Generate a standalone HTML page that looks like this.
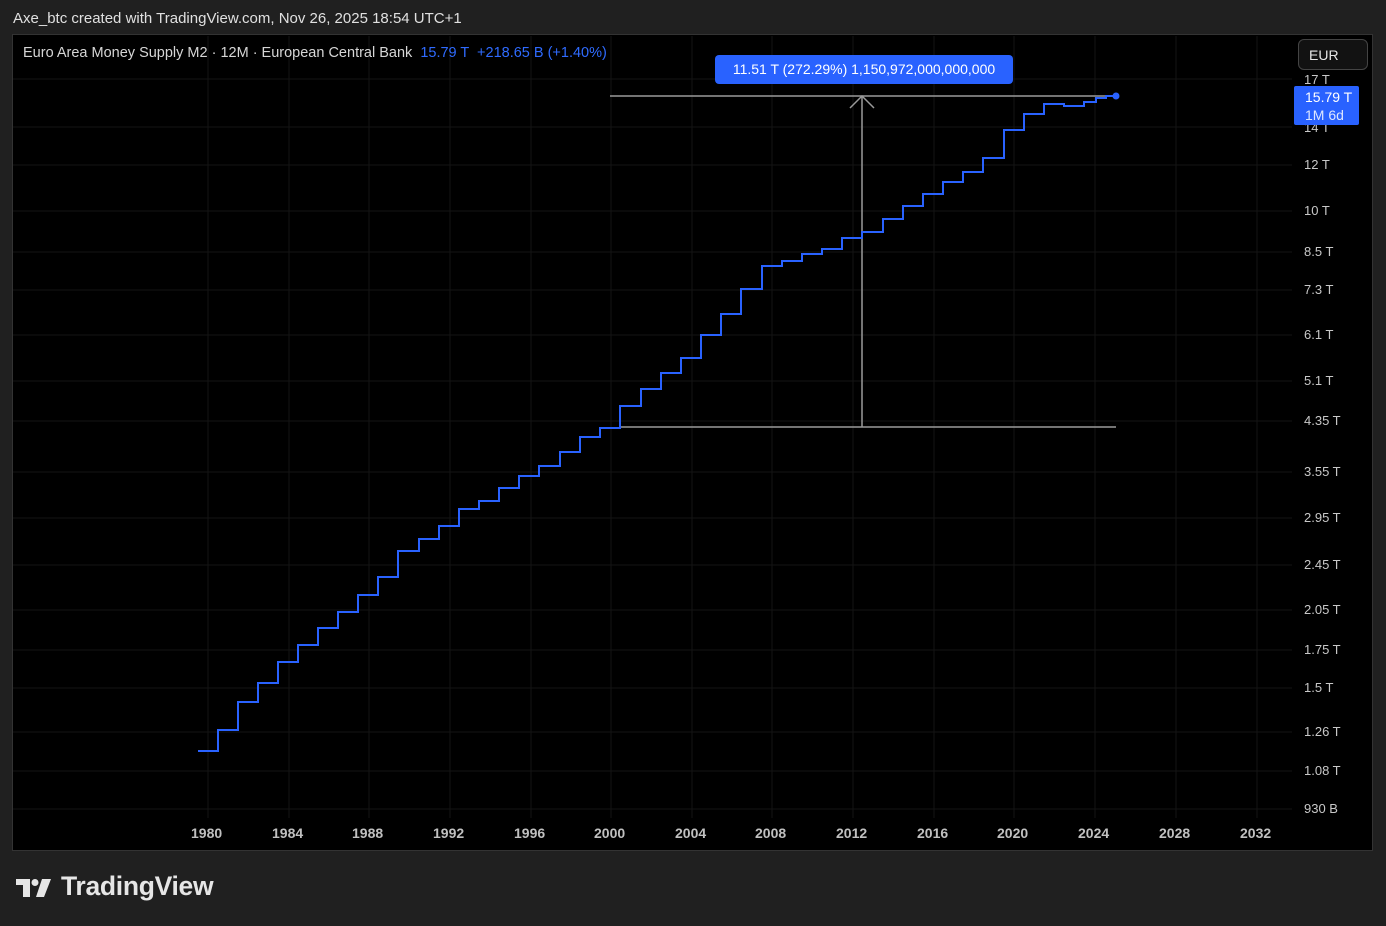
<!DOCTYPE html><html><head><style>
body{margin:0;width:1386px;height:926px;background:#202020;font-family:"Liberation Sans",sans-serif;overflow:hidden;position:relative}
.t{position:absolute;white-space:nowrap}
</style></head><body>
<div class="t" style="left:13px;top:10px;font-size:15px;color:#e0e0e0">Axe_btc created with TradingView.com, Nov 26, 2025 18:54 UTC+1</div>
<div style="position:absolute;left:12px;top:34px;width:1361px;height:817px;background:#000;border:1px solid #333;box-sizing:border-box"></div>
<svg style="position:absolute;left:0;top:0" width="1386" height="926">
<g stroke="#141414" stroke-width="1">
<line x1="208" y1="36" x2="208" y2="818"/><line x1="289" y1="36" x2="289" y2="818"/><line x1="369" y1="36" x2="369" y2="818"/><line x1="450" y1="36" x2="450" y2="818"/><line x1="531" y1="36" x2="531" y2="818"/><line x1="611" y1="36" x2="611" y2="818"/><line x1="692" y1="36" x2="692" y2="818"/><line x1="772" y1="36" x2="772" y2="818"/><line x1="853" y1="36" x2="853" y2="818"/><line x1="934" y1="36" x2="934" y2="818"/><line x1="1014" y1="36" x2="1014" y2="818"/><line x1="1095" y1="36" x2="1095" y2="818"/><line x1="1176" y1="36" x2="1176" y2="818"/><line x1="1257" y1="36" x2="1257" y2="818"/>
<line x1="13" y1="79" x2="1292" y2="79"/><line x1="13" y1="127" x2="1292" y2="127"/><line x1="13" y1="165" x2="1292" y2="165"/><line x1="13" y1="211" x2="1292" y2="211"/><line x1="13" y1="252" x2="1292" y2="252"/><line x1="13" y1="290" x2="1292" y2="290"/><line x1="13" y1="335" x2="1292" y2="335"/><line x1="13" y1="381" x2="1292" y2="381"/><line x1="13" y1="421" x2="1292" y2="421"/><line x1="13" y1="472" x2="1292" y2="472"/><line x1="13" y1="518" x2="1292" y2="518"/><line x1="13" y1="565" x2="1292" y2="565"/><line x1="13" y1="610" x2="1292" y2="610"/><line x1="13" y1="650" x2="1292" y2="650"/><line x1="13" y1="688" x2="1292" y2="688"/><line x1="13" y1="732" x2="1292" y2="732"/><line x1="13" y1="771" x2="1292" y2="771"/><line x1="13" y1="809" x2="1292" y2="809"/>
</g>
<g stroke="#9a9a9a" stroke-width="1.5" fill="none">
<line x1="610" y1="96" x2="1116" y2="96"/><line x1="620" y1="427" x2="1116" y2="427"/><line x1="862" y1="96" x2="862" y2="427"/>
<polyline points="850,108 862,96 874,108"/>
</g>
<polyline fill="none" stroke="#2962ff" stroke-width="2" points="198,751 218,751 218,730 238,730 238,702 258,702 258,683 278,683 278,662 298,662 298,645 318,645 318,628 338,628 338,612 358,612 358,595 378,595 378,577 398,577 398,551 419,551 419,539 439,539 439,526 459,526 459,509 479,509 479,501 499,501 499,488 519,488 519,476 539,476 539,466 560,466 560,452 580,452 580,437 600,437 600,428 620,428 620,406 641,406 641,389 661,389 661,373 681,373 681,358 701,358 701,335 721,335 721,314 741,314 741,289 762,289 762,266 782,266 782,261 802,261 802,254 822,254 822,249 842,249 842,238 862,238 862,232 883,232 883,219 903,219 903,206 923,206 923,194 943,194 943,182 963,182 963,172 983,172 983,158 1004,158 1004,130 1024,130 1024,114 1044,114 1044,104 1064,104 1064,106 1084,106 1084,102 1096,102 1096,98 1106,98 1106,96 1116,96"/>
<circle cx="1116" cy="96" r="3.5" fill="#2962ff"/>
<path d="M16 879h14v18h-7v-12h-7z" fill="#e6e6e6"/>
<circle cx="35" cy="882.5" r="3.5" fill="#e6e6e6"/>
<path d="M42 879h9l-7 18h-8z" fill="#e6e6e6"/>
</svg>
<div class="t" style="left:23px;top:45px;font-size:14.5px;color:#d6d6d6">Euro Area Money Supply M2 · 12M · European Central Bank <span style="color:#2f6bff">&nbsp;15.79 T &nbsp;+218.65 B (+1.40%)</span></div>
<div class="t" style="left:715px;top:55px;width:298px;height:29px;background:#2962ff;border-radius:4px;color:#fff;font-size:14px;line-height:29px;text-align:center">11.51 T (272.29%) 1,150,972,000,000,000</div>
<div class="t" style="left:1298px;top:39px;width:70px;height:31px;border:1px solid #444;border-radius:6px;background:#121212;color:#e6e6e6;font-size:14px;line-height:31px;box-sizing:border-box;padding-left:10px">EUR</div>
<div style="position:absolute;font-size:13px;color:#c8c8c8">
<div class="t" style="left:1304px;top:72px">17 T</div><div class="t" style="left:1304px;top:120px">14 T</div><div class="t" style="left:1304px;top:157px">12 T</div><div class="t" style="left:1304px;top:203px">10 T</div><div class="t" style="left:1304px;top:244px">8.5 T</div><div class="t" style="left:1304px;top:282px">7.3 T</div><div class="t" style="left:1304px;top:327px">6.1 T</div><div class="t" style="left:1304px;top:373px">5.1 T</div><div class="t" style="left:1304px;top:413px">4.35 T</div><div class="t" style="left:1304px;top:464px">3.55 T</div><div class="t" style="left:1304px;top:510px">2.95 T</div><div class="t" style="left:1304px;top:557px">2.45 T</div><div class="t" style="left:1304px;top:602px">2.05 T</div><div class="t" style="left:1304px;top:642px">1.75 T</div><div class="t" style="left:1304px;top:680px">1.5 T</div><div class="t" style="left:1304px;top:724px">1.26 T</div><div class="t" style="left:1304px;top:763px">1.08 T</div><div class="t" style="left:1304px;top:801px">930 B</div>
</div>
<div class="t" style="left:1294px;top:86px;width:65px;height:39px;background:#2962ff;border-radius:2px;color:#fff;font-size:14px;line-height:18px;padding-left:11px;box-sizing:border-box;padding-top:2px">15.79 T<br><span style="color:#dde6ff">1M 6d</span></div>
<div style="position:absolute;top:825px;font-size:14px;font-weight:bold;color:#c0c0c0">
<div class="t" style="left:191px">1980</div><div class="t" style="left:272px">1984</div><div class="t" style="left:352px">1988</div><div class="t" style="left:433px">1992</div><div class="t" style="left:514px">1996</div><div class="t" style="left:594px">2000</div><div class="t" style="left:675px">2004</div><div class="t" style="left:755px">2008</div><div class="t" style="left:836px">2012</div><div class="t" style="left:917px">2016</div><div class="t" style="left:997px">2020</div><div class="t" style="left:1078px">2024</div><div class="t" style="left:1159px">2028</div><div class="t" style="left:1240px">2032</div>
</div>
<div class="t" style="left:61px;top:871px;font-size:26.5px;font-weight:bold;color:#e6e6e6;letter-spacing:-0.3px">TradingView</div>
</body></html>
